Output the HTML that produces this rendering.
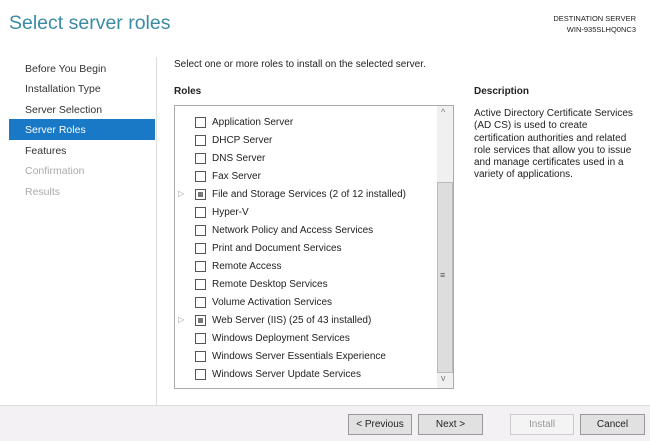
<!DOCTYPE html><html><head><style>
body{margin:0;width:650px;height:440px;background:#fff;font-family:"Liberation Sans",sans-serif;font-size:10px;color:#222;position:relative;overflow:hidden}
.a{position:absolute;white-space:nowrap}
.nav{left:25px;font-size:10.5px;color:#333}
.row{left:212px}
.cb{position:absolute;left:195px;width:9px;height:9px;border:1px solid #555;background:#fff}
.cb.p::after{content:"";position:absolute;left:2px;top:2px;width:5px;height:5px;background:#777}
.btn{position:absolute;top:414px;height:19px;border:1px solid #999;background:#e1e1e1;text-align:center;line-height:19px;font-size:10px}
</style></head><body>
<div class="a" style="left:9px;top:12px;font-size:19.5px;color:#3a8ba6">Select server roles</div>
<div class="a" style="right:14px;top:13px;font-size:7.5px;text-align:right;line-height:11px">DESTINATION SERVER<br>WIN-935SLHQ0NC3</div>
<div class="a" style="left:156px;top:57px;width:1px;height:348px;background:#ddd"></div>
<div class="a nav" style="top:63px">Before You Begin</div>
<div class="a nav" style="top:83px">Installation Type</div>
<div class="a nav" style="top:104px">Server Selection</div>
<div class="a" style="left:9px;top:119px;width:146px;height:21px;background:#1a79c6"></div>
<div class="a nav" style="top:124px;color:#fff">Server Roles</div>
<div class="a nav" style="top:145px">Features</div>
<div class="a nav" style="top:165px;color:#aaa">Confirmation</div>
<div class="a nav" style="top:186px;color:#aaa">Results</div>
<div class="a" style="left:174px;top:59px">Select one or more roles to install on the selected server.</div>
<div class="a" style="left:174px;top:86px;font-weight:bold">Roles</div>
<div class="a" style="left:474px;top:86px;font-weight:bold">Description</div>
<div class="a" style="left:474px;top:108px;line-height:12.3px">Active Directory Certificate Services<br>(AD CS) is used to create<br>certification authorities and related<br>role services that allow you to issue<br>and manage certificates used in a<br>variety of applications.</div>
<div class="a" style="left:174px;top:105px;width:278px;height:282px;border:1px solid #aaa"></div>
<div class="a" style="left:437px;top:106px;width:16px;height:282px;background:#f0f0f0"></div>
<div class="a" style="left:437px;top:182px;width:14px;height:189px;background:#ddd;border:1px solid #bbb"></div>
<div class="a" style="left:441px;top:107px;font-size:9px;color:#777">^</div>
<div class="a" style="left:441px;top:373px;font-size:9px;color:#777">v</div>
<div class="a" style="left:440px;top:270px;font-size:9px;color:#555">≡</div>
<div class="a" style="left:178px;top:189px;font-size:8px;color:#999">▷</div>
<div class="a" style="left:178px;top:315px;font-size:8px;color:#999">▷</div>
<div class="cb" style="top:117px"></div><div class="a row" style="top:117px">Application Server</div>
<div class="cb" style="top:135px"></div><div class="a row" style="top:135px">DHCP Server</div>
<div class="cb" style="top:153px"></div><div class="a row" style="top:153px">DNS Server</div>
<div class="cb" style="top:171px"></div><div class="a row" style="top:171px">Fax Server</div>
<div class="cb p" style="top:189px"></div><div class="a row" style="top:189px">File and Storage Services (2 of 12 installed)</div>
<div class="cb" style="top:207px"></div><div class="a row" style="top:207px">Hyper-V</div>
<div class="cb" style="top:225px"></div><div class="a row" style="top:225px">Network Policy and Access Services</div>
<div class="cb" style="top:243px"></div><div class="a row" style="top:243px">Print and Document Services</div>
<div class="cb" style="top:261px"></div><div class="a row" style="top:261px">Remote Access</div>
<div class="cb" style="top:279px"></div><div class="a row" style="top:279px">Remote Desktop Services</div>
<div class="cb" style="top:297px"></div><div class="a row" style="top:297px">Volume Activation Services</div>
<div class="cb p" style="top:315px"></div><div class="a row" style="top:315px">Web Server (IIS) (25 of 43 installed)</div>
<div class="cb" style="top:333px"></div><div class="a row" style="top:333px">Windows Deployment Services</div>
<div class="cb" style="top:351px"></div><div class="a row" style="top:351px">Windows Server Essentials Experience</div>
<div class="cb" style="top:369px"></div><div class="a row" style="top:369px">Windows Server Update Services</div>
<div class="a" style="left:0;top:405px;width:650px;height:35px;background:#f4f1f5;border-top:1px solid #ddd"></div>
<div class="btn" style="left:348px;width:62px">&lt; Previous</div>
<div class="btn" style="left:418px;width:63px">Next &gt;</div>
<div class="btn" style="left:510px;width:62px;background:#f4f4f4;border-color:#ccc;color:#999">Install</div>
<div class="btn" style="left:580px;width:63px">Cancel</div>
</body></html>
